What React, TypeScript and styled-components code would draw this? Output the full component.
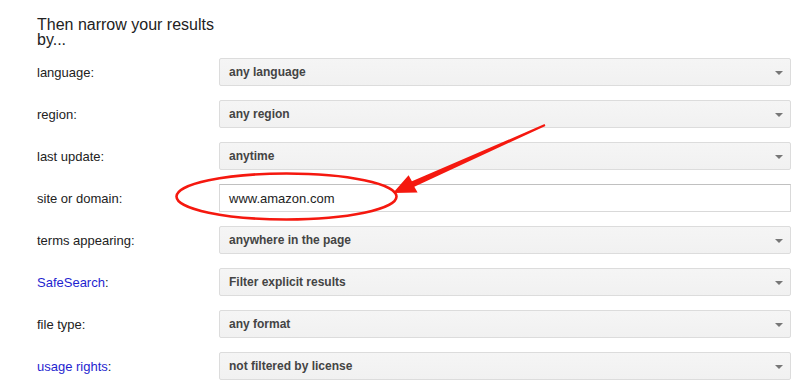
import React from "react";
import styled, { createGlobalStyle } from "styled-components";

const GlobalStyle = createGlobalStyle`
  body {
    margin: 0;
    background: #fff;
    font-family: "Liberation Sans", Arial, sans-serif;
  }
`;

interface Row {
  label: string;
  value: string;
  link?: boolean;
  input?: boolean;
}

const rows: Row[] = [
  { label: "language", value: "any language" },
  { label: "region", value: "any region" },
  { label: "last update", value: "anytime" },
  { label: "site or domain", value: "www.amazon.com", input: true },
  { label: "terms appearing", value: "anywhere in the page" },
  { label: "SafeSearch", value: "Filter explicit results", link: true },
  { label: "file type", value: "any format" },
  { label: "usage rights", value: "not filtered by license", link: true },
];

function App() {
  return (
    <React.Fragment>
      <GlobalStyle />
      <Page>
        <Title>Then narrow your results by...</Title>
        <Form>
          {rows.map((r) => (
            <FormRow key={r.label}>
              <Label>
                <LabelText $link={r.link}>{r.label}</LabelText>:
              </Label>
              {r.input ? (
                <TextField>{r.value}</TextField>
              ) : (
                <SelectBox>
                  {r.value}
                  <Caret />
                </SelectBox>
              )}
            </FormRow>
          ))}
        </Form>
        <Annotation viewBox="0 0 806 388" width="806" height="388">
          <ellipse
            cx="286.5"
            cy="196.5"
            rx="110"
            ry="23"
            fill="none"
            stroke="#f5180f"
            strokeWidth="2.6"
          />
          <polygon
            fill="#f5180f"
            points="544.6,124.1 411.9,181.3 408.6,175.2 393,193 417.6,192.6 414.3,186.7 545.4,125.9"
          />
        </Annotation>
      </Page>
    </React.Fragment>
  );
}

const Page = styled.div`
  position: relative;
  width: 806px;
  height: 388px;
  box-sizing: border-box;
  padding: 17px 15px 0 37px;
  overflow: hidden;
`;

const Title = styled.div`
  width: 190px;
  font-size: 16px;
  line-height: 15px;
  color: #222;
`;

const Form = styled.div`
  display: flex;
  flex-direction: column;
  gap: 14px;
  margin-top: 11px;
`;

const FormRow = styled.div`
  display: flex;
  align-items: center;
  height: 28px;
`;

const Label = styled.div`
  width: 182px;
  flex-shrink: 0;
  font-size: 13px;
  color: #222;
`;

const LabelText = styled.span<{ $link?: boolean }>`
  color: ${(p) => (p.$link ? "#1f1fd0" : "#222")};
`;

const SelectBox = styled.div`
  position: relative;
  flex: 1;
  height: 28px;
  box-sizing: border-box;
  display: flex;
  align-items: center;
  padding-left: 9px;
  background: linear-gradient(#f5f5f5, #f1f1f1);
  border: 1px solid #dcdcdc;
  border-radius: 2px;
  font-size: 12px;
  font-weight: bold;
  color: #444;
`;

const Caret = styled.span`
  position: absolute;
  right: 7px;
  top: 12px;
  width: 0;
  height: 0;
  border-left: 4px solid transparent;
  border-right: 4px solid transparent;
  border-top: 4px solid #777;
`;

const TextField = styled.div`
  flex: 1;
  height: 28px;
  box-sizing: border-box;
  display: flex;
  align-items: center;
  padding-left: 9px;
  background: #fff;
  border: 1px solid #d9d9d9;
  border-top-color: #c0c0c0;
  font-size: 13px;
  color: #222;
`;

const Annotation = styled.svg`
  position: absolute;
  left: 0;
  top: 0;
  pointer-events: none;
`;

export default App;
